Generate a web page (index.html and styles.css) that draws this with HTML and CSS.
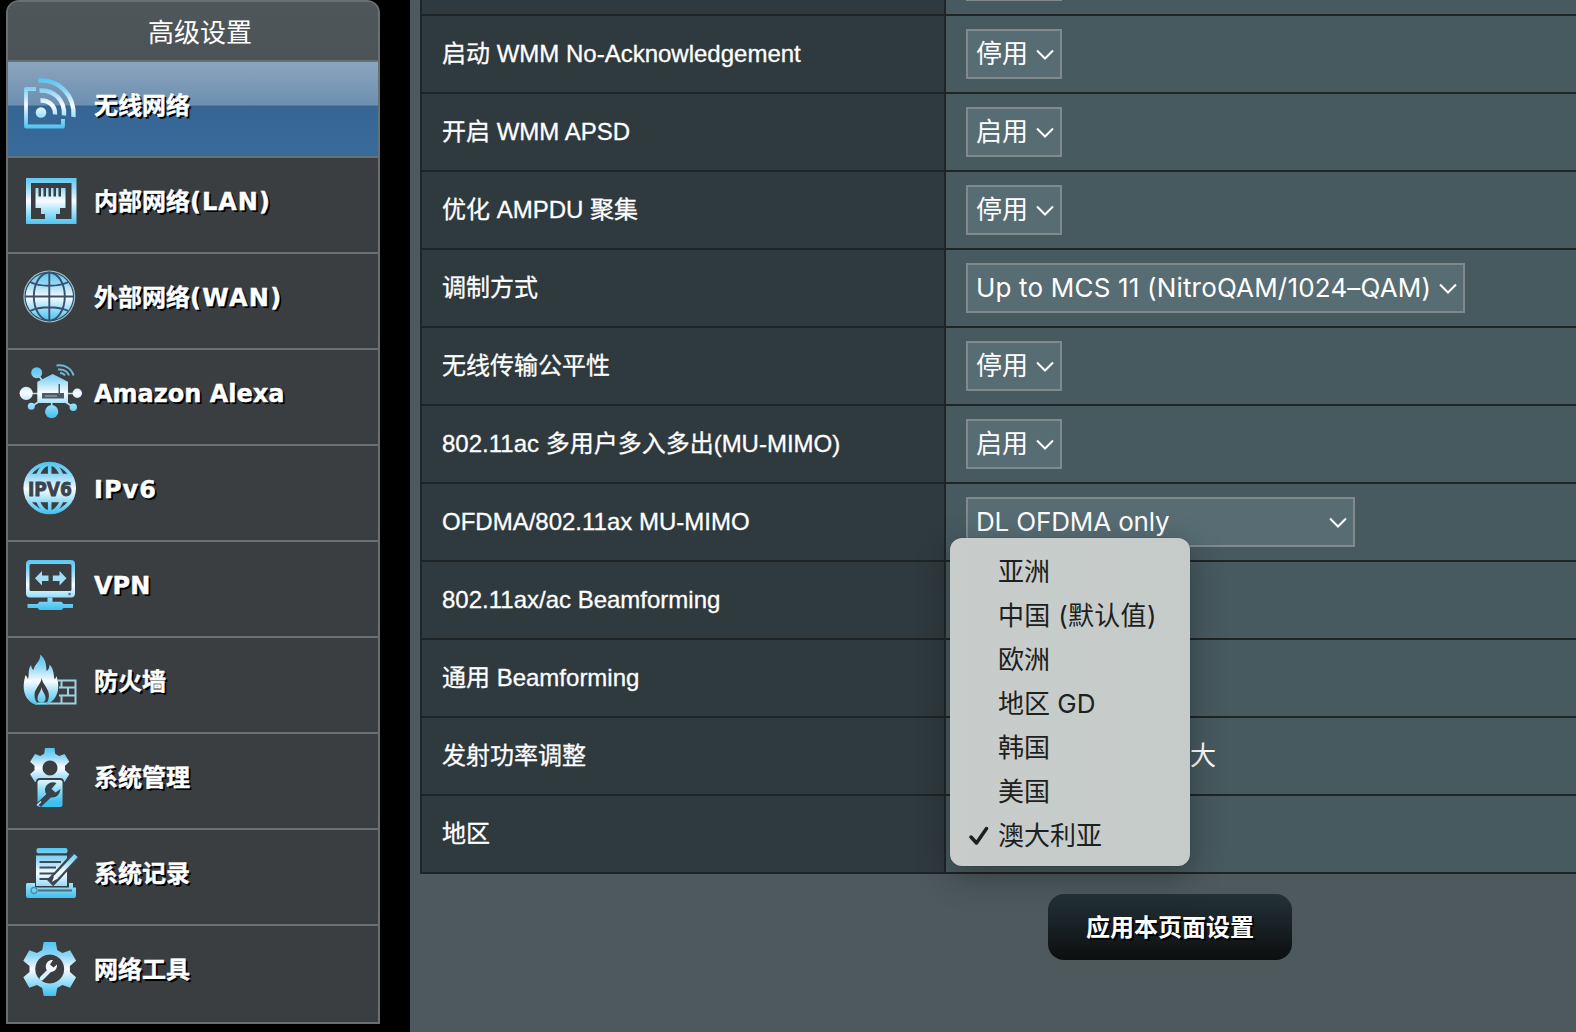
FILE: index.html
```html
<!DOCTYPE html>
<html lang="zh-CN">
<head>
<meta charset="utf-8">
<title>高级设置</title>
<link rel="stylesheet" href="styles.css">
</head>
<body>
<aside class="sidebar">
  <div class="sidebar-title">高级设置</div>
  <nav class="menu">
    <a class="item active">
      <svg class="icon" viewBox="0 0 64 94">
        <defs>
          <linearGradient id="ice" gradientUnits="userSpaceOnUse" x1="0" y1="16" x2="0" y2="68">
            <stop offset="0" stop-color="#4fc4f3"/><stop offset=".25" stop-color="#8fd6f5"/><stop offset=".52" stop-color="#fafcff"/><stop offset=".72" stop-color="#a5e2fa"/><stop offset="1" stop-color="#3fbfee"/>
          </linearGradient>
          <linearGradient id="ice-gear" gradientUnits="userSpaceOnUse" x1="0" y1="-27" x2="0" y2="27">
            <stop offset="0" stop-color="#4fc4f3"/><stop offset=".25" stop-color="#8fd6f5"/><stop offset=".5" stop-color="#fafcff"/><stop offset=".72" stop-color="#a5e2fa"/><stop offset="1" stop-color="#3fbfee"/>
          </linearGradient>
          <linearGradient id="ice-admin" gradientUnits="userSpaceOnUse" x1="0" y1="14" x2="0" y2="50">
            <stop offset="0" stop-color="#4fc4f3"/><stop offset=".25" stop-color="#8fd6f5"/><stop offset=".55" stop-color="#fafcff"/><stop offset="1" stop-color="#6fd0f5"/>
          </linearGradient>
        </defs>
        <g fill="none" stroke="url(#ice)" stroke-width="4.400">
          <path d="M18 27H8V64.500H45V57" stroke-width="3.800" stroke-linejoin="round"/>
          <path d="M20.500 18.500C41 17 57 33 55.500 55M21.500 28.500C36 27.500 47 38 46 53.500M22.500 38.500C31 38 37.500 44 37 52.500"/>
        </g>
        <circle cx="23" cy="50.500" r="5.300" fill="url(#ice)"/>
      </svg>
      <span>无线网络</span>
    </a>
    <a class="item">
      <svg class="icon" viewBox="0 0 64 94">
        <rect x="10.500" y="22.500" width="45.500" height="41" fill="none" stroke="url(#ice)" stroke-width="5"/>
        <path d="M17.500 30h3v8.500h2.500V30h2.500v8.500H28V30h2.500v8.500H33V30h2.500v8.500H38V30h2.500v8.500H43V30h4.500v20H42v6h-4v5h-11v-5h-4v-6h-5.500z" fill="url(#ice)"/>
      </svg>
      <span>内部网络<span class="latin">(LAN)</span></span>
    </a>
    <a class="item">
      <svg class="icon" viewBox="0 0 64 94">
        <circle cx="31.300" cy="42.500" r="23.700" fill="url(#ice)"/>
        <circle cx="31.300" cy="42.500" r="25.300" fill="none" stroke="#8fbfd6" stroke-width="1.300"/>
        <g fill="none" stroke="#39506a" stroke-width="1.900">
          <path d="M31.300 18v49M7 42.500h48.500M12 28c10 5 28 5 38.500 0M12 57c10-5 28-5 38.500 0"/>
          <ellipse cx="31.300" cy="42.500" rx="15.500" ry="24"/>
        </g>
      </svg>
      <span>外部网络<span class="latin wan">(WAN)</span></span>
    </a>
    <a class="item">
      <svg class="icon" viewBox="0 0 64 94">
        <path d="M8 43.500H59M13.500 56.500L22 51M55 57L46 51M33.700 61V50M18.700 22.700L26 33" stroke="#a9dff5" stroke-width="1.600"/>
        <path d="M19.300 31.700L34.700 24L50 31.700V53H19.300z" fill="url(#ice)"/>
        <g fill="url(#ice)">
          <circle cx="18.700" cy="22.700" r="5.500"/><circle cx="8.200" cy="43.300" r="6.600"/><circle cx="59.300" cy="43.300" r="4.700"/>
          <circle cx="13.300" cy="56.300" r="3.500"/><circle cx="33.700" cy="61.700" r="6.600"/><circle cx="55.300" cy="57.300" r="3.700"/>
        </g>
        <path d="M24 43h22v5.500H24zM40.500 34h1.500v9h-1.500z" fill="#4b5a69"/>
        <path d="M27 46h12" stroke="#a5b4c0" stroke-width="1"/>
        <g fill="none" stroke="#6fb7d3" stroke-width="2">
          <path d="M38.500 15.500C47 14 54 19 55.500 25.500M40 19.500C45.500 19 49.500 21.500 51 25.500M42 23C44.500 23 46 24 47 25.500"/>
        </g>
      </svg>
      <span>Amazon Alexa</span>
    </a>
    <a class="item">
      <svg class="icon" viewBox="0 0 64 94">
        <g fill="none" stroke="url(#ice)" stroke-width="3.600">
          <circle cx="31.700" cy="42" r="24.500"/>
          <ellipse cx="31.700" cy="42" rx="14" ry="24"/>
          <path d="M31.700 17v50M11 29.500H52M11 54.500H52"/>
        </g>
        <path d="M8 31H55.500Q59 42 55.500 53.500H8Q4.500 42 8 31z" fill="url(#ice)"/>
        <text x="31.900" y="49.500" class="globe-text" textLength="44" lengthAdjust="spacingAndGlyphs">IPV6</text>
      </svg>
      <span class="latin">IPv6</span>
    </a>
    <a class="item">
      <svg class="icon" viewBox="0 0 64 94">
        <path fill-rule="evenodd" d="M12 18h41a4 4 0 0 1 4 4v29.500a4 4 0 0 1-4 4H12a4 4 0 0 1-4-4V22a4 4 0 0 1 4-4zm1 4a1.500 1.500 0 0 0-1.500 1.500v24A1.500 1.500 0 0 0 13 49h39a1.500 1.500 0 0 0 1.500-1.500v-24A1.500 1.500 0 0 0 52 22z" fill="url(#ice)"/>
        <path d="M17 36.300l7-7.300v4.500h6.500v5.500H24v4.500zM48.500 36.300l-7-7.300v4.500H34.800v5.500h6.700v4.500z" fill="#a3def7"/>
        <circle cx="51.500" cy="52" r="1.300" fill="#57758a"/>
        <path d="M29.500 55.500h5v4.200h9l2 2.300h9.500v4H45.500l-2 2h-22l-2-2H9.500v-4h10l2-2.300h8z" fill="url(#ice)"/>
      </svg>
      <span>VPN</span>
    </a>
    <a class="item">
      <svg class="icon" viewBox="0 0 64 94">
        <path d="M17 65.500H57.500V42.500H40M41 49.500H57.500M41 57.500H57.500M43.500 42.500v7M50 49.500v8M43.500 57.500v8" fill="none" stroke="#9fd0e6" stroke-width="2"/>
        <path fill-rule="evenodd" d="M22 16.500C27 20 28.500 26 28.500 33C30.500 32 31.500 29.500 31.500 26.500C36 31 35.500 37 36.500 41C37.500 40.500 38.200 39.500 38.500 38C42 48 41 61 29 66.500H17C5 61 4 49 7.500 37C8.500 38 9.300 39.500 10 41C11.500 37 9.500 32 13 27C13.500 29.500 14 31 15.500 32C16 26 23.500 23 22 16.500zM23.500 40C23 47 16.500 50 16.500 57C16.500 61 18 64 20 66H28C32 61 31.500 55 29 51C28 48 24.500 45 23.500 40z" fill="url(#ice)"/>
        <path d="M23.500 49C24 54 28 56 27.500 61C27 66 20 66 19.500 61C19.500 56 23 54 23.500 49z" fill="url(#ice)"/>
      </svg>
      <span>防火墙</span>
    </a>
    <a class="item">
      <svg class="icon" viewBox="0 0 64 94">
        <path fill-rule="evenodd" d="M26.200 19.700L27 14H36.500L37.200 19.700L41.200 22L46.500 20L51.300 27.800L47 31.700V36.300L51.300 40.200L46.500 48L41.200 46L37.200 50H26.200L22.200 46L17 48L12.100 40.200L16.500 36.300V31.700L12.100 27.800L17 20L22.200 22zM32 26.500a7.500 7.500 0 1 0 .01 0z" fill="url(#ice-admin)"/>
        <rect x="18" y="44" width="28" height="30" rx="4" fill="#3a3e40"/>
        <rect x="19.500" y="46" width="25" height="27" rx="2.500" fill="url(#ice)"/>
        <path d="M21 71l11.500-11" stroke="#36424c" stroke-width="5.500"/>
        <path d="M38.500 49c-8-3-15 5-9.500 12.500 5 4 12.500 2 13.500-6.500l-5 3.500-4-3.500z" fill="#36424c"/>
        <path d="M19 71.500l4-4" stroke="#bfe9fa" stroke-width="1.500"/>
      </svg>
      <span>系统管理</span>
    </a>
    <a class="item">
      <svg class="icon" viewBox="0 0 64 94">
        <rect x="18.500" y="18" width="31" height="5.300" rx="2" fill="url(#ice)"/>
        <path d="M18 25.500h31V56H18z" fill="url(#ice)"/>
        <path d="M9.500 53H17v4.500h34V53h4v4.500h3V66a2 2 0 0 1-2 2H10a2 2 0 0 1-2-2V54.500A1.500 1.500 0 0 1 9.500 53z" fill="url(#ice)"/>
        <path d="M21.500 32H43M21.500 37.500H38M21.500 43.500H36M21.500 49H32" stroke="#3d4b58" stroke-width="2"/>
        <path d="M58 25L39 46L32 53" stroke="#3a4650" stroke-width="9"/>
        <path d="M58 25.500L37 48" stroke="url(#ice)" stroke-width="4.500"/>
        <path d="M39.500 48.500L34 52L36.500 45z" fill="#f1f8ff"/>
        <circle cx="16" cy="60.500" r="3" fill="none" stroke="#4792b1" stroke-width="1.300"/>
        <path d="M20 60.500H54" stroke="#526b7d" stroke-width="2"/>
      </svg>
      <span>系统记录</span>
    </a>
    <a class="item last">
      <svg class="icon" viewBox="0 0 64 94">
        <path fill-rule="evenodd" transform="translate(31.700 43)" d="M-7.500-19L-6-27H6L7.500-19L12.700-16L20.400-18.700L26.400-8.300L20.200-3V3L26.400 8.300L20.400 18.700L12.700 16L7.500 19L6 27H-6L-7.500 19L-12.700 16L-20.400 18.700L-26.400 8.300L-20.200 3V-3L-26.400-8.300L-20.400-18.700L-12.700-16zM0-14.500A14.500 14.500 0 1 0 .01-14.500z" fill="url(#ice-gear)"/>
        <path d="M23.500 52.500l8-8" stroke="#d8f0fb" stroke-width="4" stroke-linecap="round"/>
        <path d="M35 34c-5-1-9.500 5-6 10.500 5 3.500 10.500 0 10-6l-3.500 3-3.500-3z" fill="#f1f8ff"/>
      </svg>
      <span>网络工具</span>
    </a>
  </nav>
</aside>
<main class="content">
  <div class="table">
    <div class="row cut"><div class="label"></div><div class="value"><div class="select"></div></div></div>
    <div class="row"><div class="label">启动 WMM No-Acknowledgement</div><div class="value"><div class="select">停用<svg class="chev" viewBox="0 0 18 12"><path d="M1 1.500L9 9.500L17 1.500"/></svg></div></div></div>
    <div class="row"><div class="label">开启 WMM APSD</div><div class="value"><div class="select">启用<svg class="chev" viewBox="0 0 18 12"><path d="M1 1.500L9 9.500L17 1.500"/></svg></div></div></div>
    <div class="row"><div class="label">优化 AMPDU 聚集</div><div class="value"><div class="select">停用<svg class="chev" viewBox="0 0 18 12"><path d="M1 1.500L9 9.500L17 1.500"/></svg></div></div></div>
    <div class="row"><div class="label">调制方式</div><div class="value"><div class="select mcs"><span>Up to MCS 11 (NitroQAM/1024–QAM)</span><svg class="chev" viewBox="0 0 18 12"><path d="M1 1.500L9 9.500L17 1.500"/></svg></div></div></div>
    <div class="row"><div class="label">无线传输公平性</div><div class="value"><div class="select">停用<svg class="chev" viewBox="0 0 18 12"><path d="M1 1.500L9 9.500L17 1.500"/></svg></div></div></div>
    <div class="row"><div class="label">802.11ac 多用户多入多出(MU-MIMO)</div><div class="value"><div class="select">启用<svg class="chev" viewBox="0 0 18 12"><path d="M1 1.500L9 9.500L17 1.500"/></svg></div></div></div>
    <div class="row"><div class="label">OFDMA/802.11ax MU-MIMO</div><div class="value"><div class="select ofdma"><span>DL OFDMA only</span><svg class="chev" viewBox="0 0 18 12"><path d="M1 1.500L9 9.500L17 1.500"/></svg></div></div></div>
    <div class="row"><div class="label">802.11ax/ac Beamforming</div><div class="value"></div></div>
    <div class="row"><div class="label">通用 Beamforming</div><div class="value"></div></div>
    <div class="row"><div class="label">发射功率调整</div><div class="value"><span class="power">大</span></div></div>
    <div class="row"><div class="label">地区</div><div class="value"></div></div>
  </div>
  <button class="apply">应用本页面设置</button>
</main>
<ul class="dropdown">
  <li>亚洲</li>
  <li class="default">中国 (默认值)</li>
  <li>欧洲</li>
  <li>地区 GD</li>
  <li>韩国</li>
  <li>美国</li>
  <li><svg class="check" viewBox="0 0 20 20"><path d="M2 11L7.500 17L17.500 2.500"/></svg>澳大利亚</li>
</ul>
</body>
</html>
```
FILE: styles.css
```css
* { box-sizing: border-box; }

body {
  margin: 0;
  height: 1032px;
  display: flex;
  overflow: hidden;
  background: #000;
  color: #fff;
  font-family: "Liberation Sans", "Noto Sans CJK SC", sans-serif;
}

.sidebar {
  flex: none;
  width: 374px;
  height: 1024px;
  margin-left: 6px;
  border: 2px solid #697072;
  border-radius: 13px 13px 0 0;
  overflow: hidden;
  background: #3a3e40;
}

.sidebar-title {
  height: 60px;
  padding-left: 14px;
  border-bottom: 2px solid #697072;
  background: linear-gradient(#50575a, #4b5356);
  font: 26px/58px "Noto Sans CJK SC", sans-serif;
  text-align: center;
}

.item {
  height: 96px;
  padding-left: 10px;
  display: flex;
  border-bottom: 2px solid #697072;
  font: bold 24px/88px "DejaVu Sans", "Noto Sans CJK SC", sans-serif;
  -webkit-text-stroke: .4px #fff;
  text-shadow: 2px 2px 0 #000;
  white-space: nowrap;
}

.item.last { border-bottom: 0; }

.item.active {
  background: linear-gradient(#8aa5be 0, #6d8fb0 43px, #366594 44px, #386b9b 100%);
}

.latin { letter-spacing: 1px; }
.wan { letter-spacing: 1.3px; }

.icon { flex: none; width: 64px; height: 94px; margin-right: 12px; }

.globe-text {
  font: bold 20px "DejaVu Sans Condensed", "DejaVu Sans", sans-serif;
  fill: #3a454d;
  stroke: #3a454d;
  stroke-width: .8px;
  -webkit-text-stroke: .8px #3a454d;
  text-anchor: middle;
  text-shadow: none;
}

.content {
  flex: 1;
  min-width: 0;
  margin-left: 30px;
  padding-left: 10px;
  background: #4d595d;
}

.table { border-left: 2px solid #212527; }

.row { height: 78px; display: flex; border-bottom: 2px solid #1f2425; }

.label {
  width: 524px;
  padding-left: 20px;
  border-right: 2px solid #212527;
  background: #2f3a3e;
  font-size: 24px;
  line-height: 76px;
  white-space: pre;
  -webkit-text-stroke: .3px #fff;
}

.value {
  flex: 1;
  padding-left: 20px;
  display: flex;
  align-items: center;
  background: #475a5f;
}

.select {
  height: 50px;
  width: 96px;
  padding: 0 6px 0 8px;
  display: flex;
  align-items: center;
  justify-content: space-between;
  border: 2px solid #81898b;
  background: #576c73;
  font: 26px/46px "Inter", "Noto Sans CJK SC", sans-serif;
  white-space: nowrap;
}

.row.cut { height: 16px; overflow: hidden; }
.row.cut .value { align-items: flex-end; padding-bottom: 13px; }

.mcs { width: 499px; letter-spacing: .18px; }
.ofdma { width: 389px; letter-spacing: -.15px; }

.chev { width: 18px; height: 12px; margin-top: 1px; fill: none; stroke: #fff; stroke-width: 2; }

.power { margin-left: 224px; font-size: 26px; line-height: 74px; }

.apply {
  display: block;
  width: 244px;
  height: 66px;
  margin: 20px 0 0 628px;
  padding: 0 0 4px;
  border: 0;
  border-radius: 16px;
  background: linear-gradient(#233238, #0d0e0f);
  color: #fff;
  font: bold 24px "Noto Sans CJK SC", sans-serif;
  text-shadow: 2px 2px 0 #000;
}

/* Open region list, floating over the form */
.dropdown {
  position: absolute;
  left: 950px;
  top: 538px;
  width: 240px;
  height: 328px;
  margin: 0;
  padding: 11px 0 0 48px;
  list-style: none;
  border-radius: 12px;
  background: linear-gradient(90deg, #c8cdcb, #c5cbc8);
  box-shadow: 0 0 1px rgba(0, 0, 0, .5), 0 10px 34px rgba(0, 0, 0, .3);
  color: #1d2020;
  font: 26px/45px "Inter", "Noto Sans CJK SC", sans-serif;
  white-space: nowrap;
}

.dropdown li { position: relative; height: 44px; }
.dropdown .default { letter-spacing: .3px; }

.check {
  position: absolute;
  left: -29px;
  top: 13px;
  width: 20px;
  height: 20px;
  fill: none;
  stroke: #1d2020;
  stroke-width: 3.5;
  stroke-linecap: round;
  stroke-linejoin: round;
}
```
